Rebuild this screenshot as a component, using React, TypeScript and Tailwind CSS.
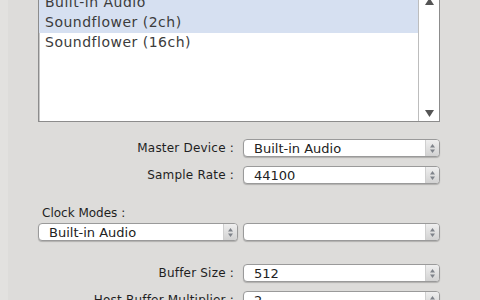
import React from "react";

const Arrows = () => (
  <svg width="7" height="11" viewBox="0 0 7 11" className="block">
    <path d="M3.5 1 L6 4.5 L1 4.5 Z" fill="#7f838a" />
    <path d="M3.5 10 L6 6.5 L1 6.5 Z" fill="#7f838a" />
  </svg>
);

const Popup = ({ value, className = "" }: { value: string; className?: string }) => (
  <div
    className={`h-[18px] flex items-stretch rounded-[4px] border border-[#9a9a9a] bg-white shadow-[0_1px_1px_rgba(0,0,0,0.2)] ${className}`}
  >
    <div className="flex-1 flex items-center pl-[10px] text-[13px] text-[#222] leading-none">{value}</div>
    <div className="w-[14px] flex items-center justify-center border-l border-[#cfcfcf] bg-gradient-to-b from-[#efefef] to-[#d2d2d2] rounded-r-[3px]">
      <Arrows />
    </div>
  </div>
);

const Row = ({ label, value }: { label: string; value: string }) => (
  <div className="flex items-center gap-[9px]">
    <div className="w-[196px] text-right text-[12px] text-[#1f1f1f] tracking-[0.2px]">{label}</div>
    <Popup value={value} className="flex-1" />
  </div>
);

export default function App() {
  const items = [
    { name: "Built-in Audio", selected: true },
    { name: "Soundflower (2ch)", selected: true },
    { name: "Soundflower (16ch)", selected: false },
  ];

  return (
    <div
      className="w-[480px] h-[300px] overflow-hidden bg-[#dddcda] flex"
      style={{ fontFamily: '"DejaVu Sans", Verdana, sans-serif' }}
    >
      <div className="w-[8px] bg-[#e2e1df]" />
      <div className="flex-1 flex flex-col pl-[30px] pr-[40px]">
        <div className="-mt-[8px] h-[130px] shrink-0 flex border border-[#8c8c8c] bg-white shadow-[inset_1px_1px_0_#c8c8c8]">
          <div className="flex-1 flex flex-col">
            {items.map((it) => (
              <div
                key={it.name}
                className={`h-[20px] flex items-center pl-[6px] pb-[1px] text-[14px] tracking-[0.5px] text-[#3c3c3c] ${
                  it.selected ? "bg-[#d6e0f1]" : ""
                }`}
              >
                {it.name}
              </div>
            ))}
          </div>
          <div className="w-[21px] border-l border-[#bdbdbd] flex flex-col items-center justify-between pt-[5px] pb-[4px] bg-white">
            <svg width="9" height="7" viewBox="0 0 9 7">
              <path d="M4.5 0 L9 7 L0 7 Z" fill="#555" />
            </svg>
            <svg width="9" height="7" viewBox="0 0 9 7">
              <path d="M0 0 L9 0 L4.5 7 Z" fill="#555" />
            </svg>
          </div>
        </div>

        <div className="mt-[17px] flex flex-col gap-[9px]">
          <Row label="Master Device :" value="Built-in Audio" />
          <Row label="Sample Rate :" value="44100" />
        </div>

        <div className="mt-[22px] text-[12px] text-[#1f1f1f] pl-[4px] leading-[14px]">Clock Modes :</div>
        <div className="mt-[3px] flex gap-[5px]">
          <Popup value="Built-in Audio" className="w-[200px]" />
          <Popup value="" className="flex-1" />
        </div>

        <div className="mt-[23px] flex flex-col gap-[9px]">
          <Row label="Buffer Size :" value="512" />
          <Row label="Host Buffer Multiplier :" value="2" />
        </div>
      </div>
    </div>
  );
}
